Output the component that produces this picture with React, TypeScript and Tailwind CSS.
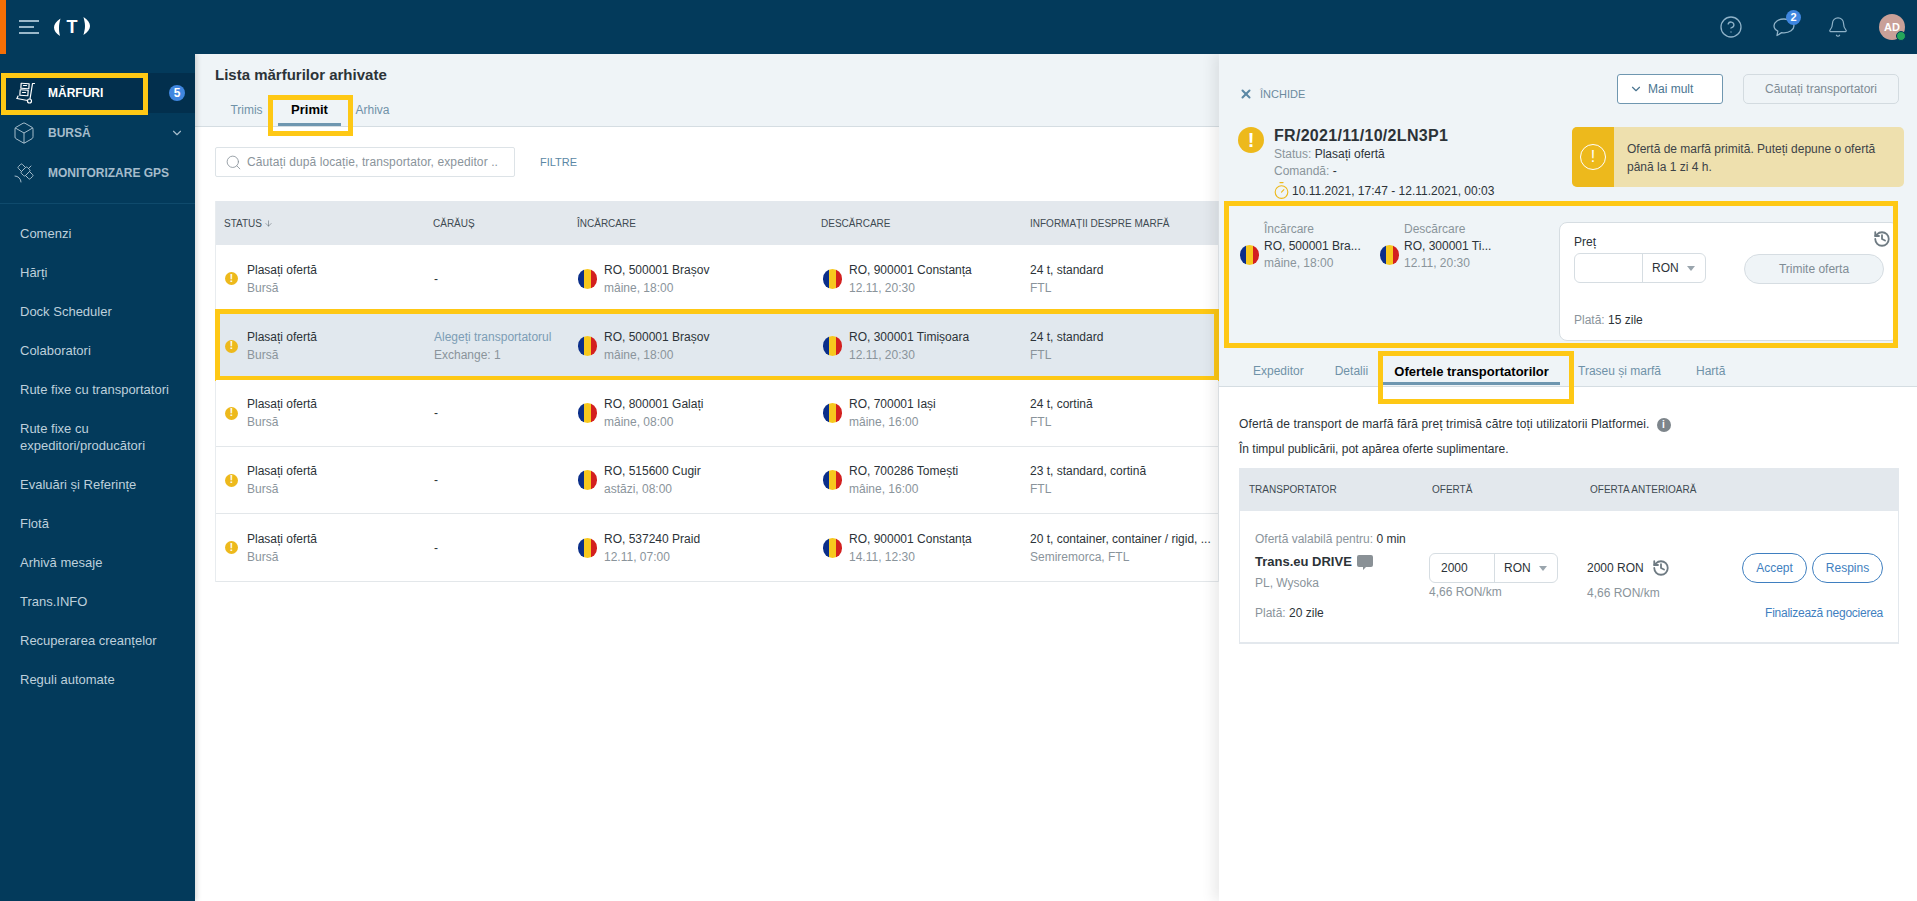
import React from "react";
import { Box, ChevronDown, Search, X, CircleHelp, Bell, History, Timer, Satellite, ArrowDown } from "lucide-react";

function Flag() {
  return (
    <span className="flex h-[20px] w-[19px] shrink-0 overflow-hidden rounded-full">
      <span className="flex-1 bg-[#0b2f8a]" />
      <span className="flex-1 bg-[#f7c81e]" />
      <span className="flex-1 bg-[#d3201f]" />
    </span>
  );
}

function Warn({ big }: { big?: boolean }) {
  if (big) {
    return (
      <span className="flex h-[26px] w-[26px] shrink-0 items-center justify-center rounded-full bg-[#edb91c] text-[20px] font-bold leading-none text-white">!</span>
    );
  }
  return (
    <span className="flex h-[13px] w-[13px] shrink-0 items-center justify-center rounded-full bg-[#edb91c] text-[10px] font-bold leading-none text-white">!</span>
  );
}

function Caret() {
  return (
    <svg width="8" height="5" viewBox="0 0 8 5" className="shrink-0">
      <polygon points="0,0 8,0 4,5" fill="#9aa5ad" />
    </svg>
  );
}

function TrolleyIcon() {
  return (
    <svg width="20" height="22" viewBox="0 0 20 22" fill="none" stroke="#fff" strokeWidth="1.2" strokeLinecap="round" strokeLinejoin="round">
      <path d="M18.500 1.500h-2l-2.500 15.500" />
      <circle cx="13.500" cy="19" r="2" />
      <path d="M1 16.500l10.500 2" />
      <path d="M1 16.500l1-2.500" />
      <rect x="5" y="1.500" width="8" height="5" transform="rotate(4 9 4)" />
      <rect x="4" y="8" width="8" height="5.500" transform="rotate(4 8 11)" />
      <path d="M6.500 10.500h3" />
      <path d="M7.500 3.500h3" />
    </svg>
  );
}

function ChatIcon() {
  return (
    <svg width="22" height="19" viewBox="0 0 22 19" fill="none" stroke="currentColor" strokeWidth="1.3" strokeLinejoin="round">
      <path d="M11 1C5.500 1 1 4 1 7.800c0 2.200 1.500 4.200 3.800 5.400L4 17.500l4.700-2.900c.7.100 1.500.2 2.300.2 5.500 0 10-3.100 10-7C21 4 16.500 1 11 1z" />
    </svg>
  );
}

function Logo() {
  return (
    <span className="relative ml-[15px] flex h-[20px] w-[36px] items-center justify-center">
      <svg width="36" height="20" viewBox="0 0 36 20" className="absolute left-0 top-0">
        <path d="M6.500 1.500C2 4.500 0 7.500 0 10.500c0 3 2 6 6 8.500C5 15 5 13 5 10.500 5 7.500 5.500 5 6.500 1.500z" fill="#fff" />
        <path d="M29.500 0c4.500 3 6.500 6 6.500 9 0 3-2 6-6.500 9 .8-3.500 1.500-6 1.500-9 0-3-.7-5.500-1.500-9z" fill="#fff" />
      </svg>
      <span className="relative text-[18px] font-bold leading-none text-white">T</span>
    </span>
  );
}

const menu = [
  "Comenzi",
  "Hărți",
  "Dock Scheduler",
  "Colaboratori",
  "Rute fixe cu transportatori",
  "Rute fixe cu expeditori/producători",
  "Evaluări și Referințe",
  "Flotă",
  "Arhivă mesaje",
  "Trans.INFO",
  "Recuperarea creanțelor",
  "Reguli automate",
];

function Sidebar() {
  return (
    <aside className="z-10 w-[195px] shrink-0 bg-[#033a5b] pt-[19px] shadow-[2px_0_5px_rgba(0,0,0,0.15)]">
      <div className="relative flex h-[40px] items-center bg-[#022f4d] pl-[16px]">
        <TrolleyIcon />
        <span className="ml-[12px] text-[12px] font-bold text-white">MĂRFURI</span>
        <span className="absolute left-[169px] top-[12px] flex h-[16px] w-[16px] items-center justify-center rounded-full bg-[#3f86e0] text-[12px] font-bold text-white">5</span>
        <span className="absolute left-[1px] top-0 h-[42px] w-[147px] border-[5px] border-[#fec815]" />
      </div>
      <div className="flex h-[40px] items-center pl-[12px] text-[#a5bccb]">
        <Box size={24} strokeWidth={1} />
        <span className="ml-[12px] flex-1 text-[12px] font-bold">BURSĂ</span>
        <ChevronDown size={14} className="mr-[11px]" />
      </div>
      <div className="flex h-[40px] items-center pl-[12px] text-[#a5bccb]">
        <Satellite size={24} strokeWidth={1} />
        <span className="ml-[12px] text-[12px] font-bold">MONITORIZARE GPS</span>
      </div>
      <div className="mt-[10px] border-t border-[#0f4a6c] pt-[10px]">
        {menu.map((m) => (
          <div
            key={m}
            className={
              (m.length > 30 ? "h-[56px]" : "h-[39px]") +
              " flex items-center pl-[20px] pr-[10px] text-[13px] leading-[17px] text-[#bed0db]"
            }
          >
            {m}
          </div>
        ))}
      </div>
    </aside>
  );
}

type RowData = {
  carrier?: boolean;
  from: string;
  fromDate: string;
  to: string;
  toDate: string;
  info: string;
  sub: string;
  h: string;
  selected?: boolean;
};

const rows: RowData[] = [
  { from: "RO, 500001 Brașov", fromDate: "mâine, 18:00", to: "RO, 900001 Constanța", toDate: "12.11, 20:30", info: "24 t, standard", sub: "FTL", h: "h-[68px]" },
  { carrier: true, selected: true, from: "RO, 500001 Brașov", fromDate: "mâine, 18:00", to: "RO, 300001 Timișoara", toDate: "12.11, 20:30", info: "24 t, standard", sub: "FTL", h: "h-[67px]" },
  { from: "RO, 800001 Galați", fromDate: "mâine, 08:00", to: "RO, 700001 Iași", toDate: "mâine, 16:00", info: "24 t, cortină", sub: "FTL", h: "h-[67px]" },
  { from: "RO, 515600 Cugir", fromDate: "astăzi, 08:00", to: "RO, 700286 Tomești", toDate: "mâine, 16:00", info: "23 t, standard, cortină", sub: "FTL", h: "h-[67px]" },
  { from: "RO, 537240 Praid", fromDate: "12.11, 07:00", to: "RO, 900001 Constanța", toDate: "14.11, 12:30", info: "20 t, container, container / rigid, ...", sub: "Semiremorca, FTL", h: "h-[68px]" },
];

const gridCols = "grid grid-cols-[208px_144px_244px_209px_197px]";

function Place({ a, b, ml }: { a: string; b: string; ml: string }) {
  return (
    <div className={"flex items-center px-[9px]"}>
      <span className={ml}>
        <Flag />
      </span>
      <div className="ml-[7px] leading-[18px]">
        <div className="text-[#2c3338]">{a}</div>
        <div className="text-[#8a949b]">{b}</div>
      </div>
    </div>
  );
}

function Row({ r }: { r: RowData }) {
  return (
    <div className={`${gridCols} ${r.h} relative border-b border-[#e3e7ea] text-[12px] ${r.selected ? "bg-[#e1e8ee]" : "bg-white"}`}>
      <div className="flex items-center pl-[9px]">
        <Warn />
        <div className="ml-[9px] leading-[18px]">
          <div className="text-[#2c3338]">Plasați ofertă</div>
          <div className="text-[#8a949b]">Bursă</div>
        </div>
      </div>
      <div className="flex items-center px-[10px]">
        {r.carrier ? (
          <div className="leading-[18px]">
            <div className="text-[#7c9db5]">Alegeți transportatorul</div>
            <div className="text-[#8a949b]">Exchange: 1</div>
          </div>
        ) : (
          <span className="text-[#2c3338]">-</span>
        )}
      </div>
      <Place a={r.from} b={r.fromDate} ml="ml-[1px]" />
      <Place a={r.to} b={r.toDate} ml="ml-[2px]" />
      <div className="flex items-center overflow-hidden pl-[9px]">
        <div className="whitespace-nowrap leading-[18px]">
          <div className="text-[#2c3338]">{r.info}</div>
          <div className="text-[#8a949b]">{r.sub}</div>
        </div>
      </div>
      {r.selected && <span className="absolute -inset-x-[1px] -bottom-[2px] -top-[4px] border-[5px] border-[#fec815]" />}
    </div>
  );
}

function Main() {
  return (
    <main className="min-w-0 flex-1 bg-white">
      <div className="h-[73px] border-b border-[#d5dde2] bg-[#eff4f7] pl-[20px] pt-[12px]">
        <h1 className="text-[15px] font-bold leading-[18px] text-[#2c3338]">Lista mărfurilor arhivate</h1>
        <div className="mt-[13px] flex text-[12px] leading-[26px]">
          <span className="w-[63px] text-center text-[#6f92a8]">Trimis</span>
          <span className="relative h-[29px] w-[63px] text-center text-[13px] font-bold text-black">
            Primit
            <span className="absolute bottom-0 left-0 h-[3px] w-full bg-[#6f97b0]" />
            <span className="absolute -left-[10px] -right-[12px] -top-[2px] h-[41px] border-[5px] border-[#fec815]" />
          </span>
          <span className="w-[63px] text-center text-[#6f92a8]">Arhiva</span>
        </div>
      </div>
      <div className="px-[20px] pt-[20px]">
        <div className="flex items-center">
          <div className="flex h-[30px] w-[300px] items-center rounded-[2px] border border-[#dde3e7] pl-[9px] text-[12px] text-[#8a949b]">
            <Search size={17} strokeWidth={1.2} className="shrink-0 text-[#8a949b]" />
            <span className="ml-[5px] whitespace-nowrap tracking-[0.1px]">Căutați după locație, transportator, expeditor ..</span>
          </div>
          <span className="ml-[25px] text-[11px] text-[#5b88a5]">FILTRE</span>
        </div>
      </div>
      <div className="ml-[20px] mt-[24px] w-[1004px] border-x border-[#e8ecef]">
        <div className={`${gridCols} h-[44px] items-center bg-[#e3e8ed] text-[10px] text-[#3e4a52]`}>
          <div className="flex items-center gap-[2px] pl-[8px]">
            STATUS <ArrowDown size={9} strokeWidth={1.2} />
          </div>
          <div className="pl-[9px]">CĂRĂUȘ</div>
          <div className="pl-[9px]">ÎNCĂRCARE</div>
          <div className="pl-[9px]">DESCĂRCARE</div>
          <div className="pl-[9px]">INFORMAȚII DESPRE MARFĂ</div>
        </div>
        {rows.map((r, i) => (
          <Row key={i} r={r} />
        ))}
      </div>
    </main>
  );
}

function RonInput({ value }: { value?: string }) {
  return (
    <div className="flex h-[30px] overflow-hidden rounded-[6px] border border-[#d6dde2] bg-white text-[12px] text-[#2c3338]">
      <span className="flex h-full flex-1 items-center border-r border-[#d6dde2] pl-[11px]">{value}</span>
      <span className="flex h-full w-[62px] items-center gap-[8px] pl-[9px]">
        RON <Caret />
      </span>
    </div>
  );
}

function Panel() {
  return (
    <section className="z-20 w-[698px] shrink-0 bg-white shadow-[-6px_0_12px_rgba(0,0,0,0.08)]">
      <div className="h-[333px] border-b border-[#d5dde2] bg-[#eff4f7]">
        <div className="flex items-start justify-between pl-[20px] pr-[18px] pt-[20px]">
          <div className="mt-[12px] flex items-center text-[11px] text-[#6b8a9e]">
            <X size={14} strokeWidth={3.5} className="text-[#5b88a5]" />
            <span className="ml-[7px]">ÎNCHIDE</span>
          </div>
          <div className="flex gap-[20px] text-[12px]">
            <div className="flex h-[30px] w-[106px] items-center rounded-[3px] border border-[#6f97b0] bg-white pl-[11px] text-[#4a7590]">
              <ChevronDown size={14} strokeWidth={2} className="text-[#4a7590]" />
              <span className="ml-[5px]">Mai mult</span>
            </div>
            <div className="flex h-[30px] w-[156px] items-center justify-center rounded-[5px] border border-[#d3dbe0] text-[#7f8c95]">Căutați transportatori</div>
          </div>
        </div>
        <div className="mt-[23px] flex h-[73px] pl-[19px] pr-[13px]">
          <Warn big />
          <div className="ml-[10px] flex-1 text-[12px] leading-[17px]">
            <div className="-mt-[1px] text-[16px] font-bold leading-[20px] tracking-[0.3px] text-[#2c3338]">FR/2021/11/10/2LN3P1</div>
            <div className="text-[#8a949b]">
              Status: <span className="text-[#2c3338]">Plasați ofertă</span>
            </div>
            <div className="text-[#8a949b]">
              Comandă: <span className="text-[#2c3338]">-</span>
            </div>
            <div className="mt-[3px] flex items-center text-[#2c3338]">
              <Timer size={19} strokeWidth={1.4} className="-ml-[2px] -mt-[2px] shrink-0 text-[#edb91c]" />
              <span className="ml-[1px]">10.11.2021, 17:47 - 12.11.2021, 00:03</span>
            </div>
          </div>
          <div className="flex h-[60px] w-[332px] overflow-hidden rounded-[5px] bg-[#eee0ae]">
            <div className="flex w-[42px] items-center justify-center bg-[#edb91c]">
              <span className="flex h-[26px] w-[26px] items-center justify-center rounded-full border-[1.5px] border-white text-[16px] leading-none text-white">!</span>
            </div>
            <div className="ml-[13px] pt-[13px] text-[12px] leading-[18px] text-[#3d4347]">
              Ofertă de marfă primită. Puteți depune o ofertă
              <br />
              până la 1 zi 4 h.
            </div>
          </div>
        </div>
        <div className="ml-[5px] mt-[1px] flex h-[147px] w-[674px] overflow-hidden border-[5px] border-[#fec815]">
          <div className="flex w-[151px] shrink-0 pl-[11px] pt-[15px] text-[12px] leading-[17px]">
            <div className="mt-[24px]">
              <Flag />
            </div>
            <div className="ml-[5px]">
              <div className="text-[#8a949b]">Încărcare</div>
              <div className="text-[#2c3338]">RO, 500001 Bra...</div>
              <div className="text-[#8a949b]">mâine, 18:00</div>
            </div>
          </div>
          <div className="flex w-[179px] shrink-0 pt-[15px] text-[12px] leading-[17px]">
            <div className="mt-[24px]">
              <Flag />
            </div>
            <div className="ml-[5px]">
              <div className="text-[#8a949b]">Descărcare</div>
              <div className="text-[#2c3338]">RO, 300001 Ti...</div>
              <div className="text-[#8a949b]">12.11, 20:30</div>
            </div>
          </div>
          <div className="relative mt-[16px] h-[119px] w-[340px] shrink-0 rounded-[8px] border border-[#d6dde2] bg-white pl-[14px] pt-[11px] text-[12px]">
            <div className="leading-[17px] text-[#2c3338]">Preț</div>
            <div className="mt-[2px] flex">
              <div className="w-[132px]">
                <RonInput />
              </div>
              <div className="ml-[38px] mt-[1px] flex h-[30px] w-[140px] items-center justify-center rounded-full border border-[#d6dde2] bg-[#eff4f7] text-[#7f8c95]">Trimite oferta</div>
            </div>
            <div className="mt-[28px] leading-[17px] text-[#8a949b]">
              Plată: <span className="text-[#2c3338]">15 zile</span>
            </div>
            <History size={18} strokeWidth={2.4} className="absolute left-[313px] top-[7px] text-[#6e7a82]" />
          </div>
        </div>
        <div className="flex h-[37px] text-[12px] leading-[47px]">
          <span className="ml-[34px] text-[#6f92a8]">Expeditor</span>
          <span className="ml-[31px] text-[#6f92a8]">Detalii</span>
          <span className="relative ml-[15px] h-[37px] w-[177px] text-center text-[13px] font-bold text-black">
            Ofertele transportatorilor
            <span className="absolute bottom-0 left-0 h-[3px] w-full bg-[#6f97b0]" />
            <span className="absolute -left-[5px] -right-[14px] top-[3px] h-[53px] border-[5px] border-[#fec815]" />
          </span>
          <span className="ml-[18px] text-[#6f92a8]">Traseu și marfă</span>
          <span className="ml-[35px] text-[#6f92a8]">Hartă</span>
        </div>
      </div>
      <div className="pl-[20px] pr-[18px] pt-[25px] text-[12px] leading-[25px] text-[#2c3338]">
        <div className="flex items-center tracking-[0.11px]">
          Ofertă de transport de marfă fără preț trimisă către toți utilizatorii Platformei.
          <span className="ml-[7px] flex h-[14px] w-[14px] items-center justify-center rounded-full bg-[#7d858b] text-[10px] font-bold leading-none text-white">i</span>
        </div>
        <div>În timpul publicării, pot apărea oferte suplimentare.</div>
        <div className="mt-[6px] border-x border-b-2 border-[#e3e8ed]">
          <div className="-mx-[1px] flex h-[43px] items-center bg-[#e3e8ed] text-[10px] leading-none text-[#3e4a52]">
            <span className="w-[193px] pl-[10px]">TRANSPORTATOR</span>
            <span className="w-[158px]">OFERTĂ</span>
            <span>OFERTA ANTERIOARĂ</span>
          </div>
          <div className="flex h-[131px] leading-[17px]">
            <div className="w-[189px] shrink-0 pl-[15px] pt-[20px]">
              <div className="text-[#8a949b]">
                Ofertă valabilă pentru: <span className="text-[#2c3338]">0 min</span>
              </div>
              <div className="mt-[5px] flex items-center text-[13px] font-bold">
                Trans.eu DRIVE
                <svg width="16" height="15" viewBox="0 0 16 15" className="ml-[5px] mt-[1px]">
                  <path d="M2 0h12a2 2 0 0 1 2 2v8a2 2 0 0 1-2 2H9l-3 3v-3H2a2 2 0 0 1-2-2V2a2 2 0 0 1 2-2z" fill="#8a9196" />
                </svg>
              </div>
              <div className="mt-[5px] text-[#8a949b]">PL, Wysoka</div>
              <div className="mt-[13px] text-[#8a949b]">
                Plată: <span className="text-[#2c3338]">20 zile</span>
              </div>
            </div>
            <div className="w-[158px] shrink-0 pt-[42px]">
              <div className="w-[129px]">
                <RonInput value="2000" />
              </div>
              <div className="mt-[1px] text-[#8a949b]">4,66 RON/km</div>
            </div>
            <div className="flex-1 pt-[42px]">
              <div className="flex h-[30px] items-center">
                2000 RON
                <History size={18} strokeWidth={2.4} className="ml-[8px] text-[#6e7a82]" />
              </div>
              <div className="mt-[2px] text-[#8a949b]">4,66 RON/km</div>
            </div>
            <div className="w-[170px] shrink-0 pr-[15px] pt-[42px] text-[#3f7fc0]">
              <div className="flex justify-end gap-[5px]">
                <span className="flex h-[30px] w-[65px] items-center justify-center rounded-full border border-[#3f7fc0]">Accept</span>
                <span className="flex h-[30px] w-[71px] items-center justify-center rounded-full border border-[#3f7fc0]">Respins</span>
              </div>
              <div className="mt-[22px] whitespace-nowrap text-right tracking-[-0.25px]">Finalizează negocierea</div>
            </div>
          </div>
        </div>
      </div>
    </section>
  );
}

export default function App() {
  return (
    <div className="flex h-[901px] w-[1917px] flex-col overflow-hidden bg-white font-['Liberation_Sans',sans-serif]">
      <header className="relative z-30 flex h-[54px] shrink-0 items-center bg-[#033a5b]">
        <span className="h-full w-[6px] bg-[#f56f06]" />
        <div className="ml-[13px] flex h-[14px] w-[20px] flex-col justify-between">
          <span className="h-[2px] w-[20px] bg-[#9ab8ca]" />
          <span className="h-[2px] w-[15px] bg-[#9ab8ca]" />
          <span className="h-[2px] w-[20px] bg-[#9ab8ca]" />
        </div>
        <Logo />
        <div className="ml-auto flex items-center text-[#8fb2c8]">
          <CircleHelp size={24} strokeWidth={1.3} />
          <span className="relative ml-[30px]">
            <ChatIcon />
            <span className="absolute -right-[6px] -top-[8px] flex h-[15px] w-[15px] items-center justify-center rounded-full bg-[#3f86e0] text-[11px] font-bold text-white">2</span>
          </span>
          <Bell size={22} strokeWidth={1.3} className="ml-[32px]" />
          <span className="relative ml-[30px] mr-[12px] flex h-[26px] w-[26px] items-center justify-center rounded-full bg-[#c9a098] text-[11px] font-bold text-white">
            AD
            <span className="absolute -bottom-[1px] -right-[1px] h-[10px] w-[10px] rounded-full border-[1.5px] border-[#033a5b] bg-[#25a75a]" />
          </span>
        </div>
      </header>
      <div className="flex min-h-0 flex-1">
        <Sidebar />
        <Main />
        <Panel />
      </div>
    </div>
  );
}
